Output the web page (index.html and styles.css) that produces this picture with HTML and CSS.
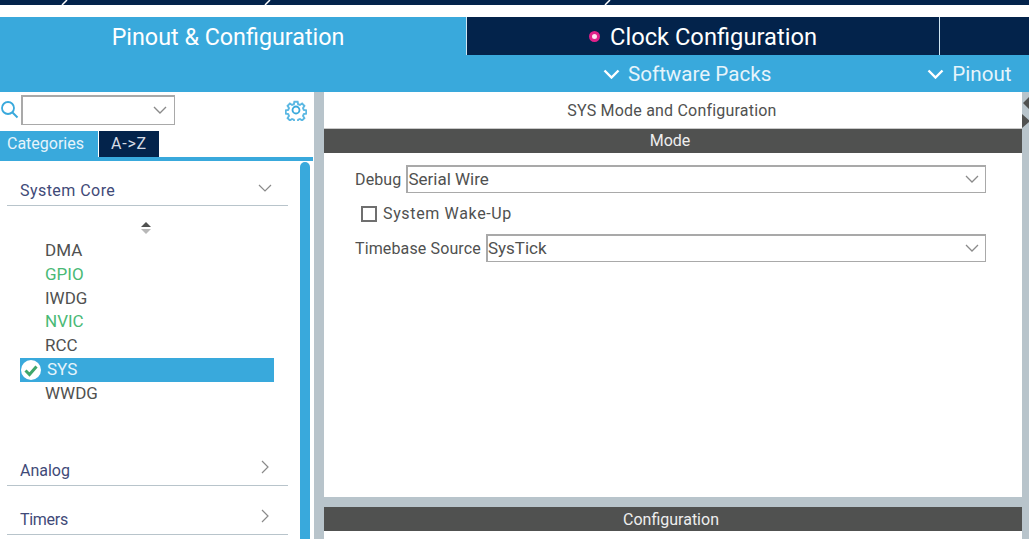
FILE: index.html
```html
<!DOCTYPE html>
<html lang="en">
<head>
<meta charset="utf-8">
<title>SYS Mode and Configuration</title>
<link rel="stylesheet" href="styles.css">
</head>
<body>
<div class="crumbs">
  <svg class="crumb-art" width="1029" height="6" viewBox="0 0 1029 6"><path d="M67 0l-5 5M270 0l-5 5M610 0l-5 5" fill="none" stroke="#fff" stroke-width="1.5"/></svg>
</div>
<div class="tabs">
  <div class="tab tab-active tab-pinout">Pinout &amp; Configuration</div>
  <div class="tab tab-clock"><span class="dot"></span>Clock Configuration</div>
  <div class="tab tab-rest"></div>
</div>
<div class="subbar">
  <div class="sub sub-packs"><svg class="sub-chev" width="17" height="10" viewBox="0 0 17 10"><path d="M1.500 1.500L8.500 8.500l7-7" fill="none" stroke="#fff" stroke-width="2.400"/></svg>Software Packs</div>
  <div class="sub sub-pinout"><svg class="sub-chev" width="17" height="10" viewBox="0 0 17 10"><path d="M1.500 1.500L8.500 8.500l7-7" fill="none" stroke="#fff" stroke-width="2.400"/></svg>Pinout</div>
</div>
<div class="main">
  <aside class="side">
    <div class="searchrow">
      <svg class="search-ic" width="19" height="19" viewBox="0 0 19 19"><circle cx="8" cy="8" r="6" fill="none" stroke="#39a9dc" stroke-width="1.8"/><path d="M12.500 12.500l5 5" stroke="#39a9dc" stroke-width="2"/></svg>
      <div class="searchbox"><svg width="14" height="8" viewBox="0 0 14 8"><path d="M1 1l6 6 6-6" fill="none" stroke="#8a8a8a" stroke-width="1.4"/></svg></div>
      <svg class="gear" width="22" height="22" viewBox="0 0 24 24"><path d="M10 2h4l.6 3 2.200.9 2.600-1.700 2.800 2.800-1.700 2.600.9 2.200 3 .6v4l-3 .6-.9 2.200 1.700 2.600-2.800 2.800-2.600-1.700-2.200.9-.6 3h-4l-.6-3-2.200-.9-2.600 1.700-2.800-2.800 1.700-2.600-.9-2.200-3-.6v-4l3-.6.9-2.200-1.700-2.600 2.800-2.800 2.600 1.700 2.200-.9z" transform="translate(1.200 1.200) scale(.9)" fill="none" stroke="#5bb8e3" stroke-width="2.300"/><circle cx="12" cy="12" r="3.800" fill="none" stroke="#39a9dc" stroke-width="2"/></svg>
    </div>
    <div class="cattabs">
      <div class="cat cat-on">Categories</div>
      <div class="cat cat-off">A-&gt;Z</div>
    </div>
    <div class="listwrap">
      <div class="list">
        <div class="group group-open"><span>System Core</span><svg width="14" height="8" viewBox="0 0 14 8"><path d="M1 1l6 6 6-6" fill="none" stroke="#8a8a8a" stroke-width="1.2"/></svg></div>
        <div class="sorter"><span class="sort-up"></span><span class="sort-down"></span></div>
        <ul class="items">
          <li class="item">DMA</li>
          <li class="item item-green">GPIO</li>
          <li class="item">IWDG</li>
          <li class="item item-green">NVIC</li>
          <li class="item">RCC</li>
          <li class="item item-sel"><svg class="check" width="22" height="22" viewBox="0 0 22 22"><circle cx="11" cy="11" r="10" fill="#fff"/><path d="M5.500 11.500l4 4 7-8" fill="none" stroke="#3fa66b" stroke-width="3"/></svg>SYS</li>
          <li class="item">WWDG</li>
        </ul>
        <div class="group group-analog"><span>Analog</span><svg width="8" height="14" viewBox="0 0 8 14"><path d="M1 1l6 6-6 6" fill="none" stroke="#8a8a8a" stroke-width="1.2"/></svg></div>
        <div class="group group-timers"><span>Timers</span><svg width="8" height="14" viewBox="0 0 8 14"><path d="M1 1l6 6-6 6" fill="none" stroke="#8a8a8a" stroke-width="1.2"/></svg></div>
      </div>
      <div class="scroll"></div>
    </div>
  </aside>
  <section class="panel">
    <div class="mode">
      <div class="paneltitle">SYS Mode and Configuration</div>
      <div class="band band-mode">Mode</div>
      <div class="form">
        <div class="row row-debug"><label>Debug</label><div class="select"><span>Serial Wire</span><svg width="14" height="8" viewBox="0 0 14 8"><path d="M1 1l6 6 6-6" fill="none" stroke="#8a8a8a" stroke-width="1.3"/></svg></div></div>
        <div class="checkrow"><span class="box"></span>System Wake-Up</div>
        <div class="row row-time"><label>Timebase Source</label><div class="select"><span>SysTick</span><svg width="14" height="8" viewBox="0 0 14 8"><path d="M1 1l6 6 6-6" fill="none" stroke="#8a8a8a" stroke-width="1.3"/></svg></div></div>
      </div>
    </div>
    <div class="config">
      <div class="band band-config">Configuration</div>
    </div>
    <svg class="collapse" width="7" height="40" viewBox="0 0 7 40"><path d="M7 4L1 10l6 6zM0 21l8 7-8 7z" fill="#505150"/></svg>
  </section>
</div>
</body>
</html>
```
FILE: styles.css
```css
* { box-sizing: border-box; }
html, body { margin: 0; padding: 0; }
body { width: 1029px; height: 539px; overflow: hidden; background: #fff; font-family: Roboto, "Liberation Sans", sans-serif; color: #505150; }
.crumbs { height: 17px; border-top: 5px solid #03234b; }
.crumb-art { display: block; margin-top: -5px; }
.tabs { display: flex; height: 38px; background: #03234b; }
.tab { color: #fff; line-height: 40px; height: 38px; text-align: center; }
.tab-active { width: 466px; background: #39a9dc; padding-right: 10px; font-size: 23.300px; }
.tab-clock { width: 474px; border-left: 1px solid #cfe6f2; border-right: 1px solid #cfe6f2; display: flex; align-items: center; justify-content: center; font-size: 23.700px; padding-top: 2px; }
.tab-rest { flex: 1; }
.dot { width: 11px; height: 11px; border-radius: 50%; background: #fbe3f0; border: 3px solid #e0218a; margin-right: 10px; margin-top: -2px; }
.subbar { height: 37px; background: #39a9dc; display: flex; color: #e6f4fb; font-size: 20.600px; padding-top: 1px; }
.sub { display: flex; align-items: center; }
.sub-chev { margin-right: 8px; }
.sub-packs { margin-left: 603px; }
.sub-pinout { margin-left: 156px; }
.main { display: flex; height: 447px; }
.side { width: 314px; flex: none; }
.searchrow { display: flex; align-items: center; height: 39px; padding-bottom: 4px; }
.search-ic { margin-right: 2px; flex: none; }
.searchbox { width: 154px; height: 30px; border: 1px solid #a9a9a9; border-width: 2px 1px 1px 2px; display: flex; align-items: center; justify-content: flex-end; padding-right: 7px; }
.gear { margin-left: 110px; }
.cattabs { display: flex; height: 30px; border-bottom: 4px solid #39a9dc; width: 313px; }
.cat { font-size: 16px; line-height: 26px; height: 26px; }
.cat-on { width: 98px; background: #39a9dc; color: #e6f4fb; padding-left: 7px; }
.cat-off { width: 60px; margin-left: 1px; background: #03234b; color: #d5dbe4; letter-spacing: .8px; text-align: center; }
.listwrap { display: flex; height: 378px; }
.list { width: 300px; padding-left: 7px; }
.group { width: 281px; display: flex; justify-content: space-between; align-items: center; border-bottom: 1px solid #b8c4cb; font-size: 16px; color: #3f4a78; padding-left: 13px; padding-right: 19px; height: 31px; }
.group-open { margin-top: 14px; padding-right: 16px; }
.group-open span { letter-spacing: .45px; }
.group-open svg { margin-top: -5px; }
.group-analog { margin-top: 27px; }
.group-analog svg, .group-timers svg { margin-top: -6px; }
.group-timers { margin-top: 18px; }
.group-timers span { letter-spacing: -.3px; }
.sorter { margin: 16px 0 0 134px; display: flex; flex-direction: column; gap: 2px; width: 10px; }
.sort-up { width: 0; border: 5px solid transparent; border-top: 0; border-bottom: 5px solid #505150; }
.sort-down { width: 0; border: 5px solid transparent; border-bottom: 0; border-top: 5px solid #b8b8b8; }
.items { list-style: none; margin: 5px 0 0; padding: 0 0 0 13px; height: 189px; }
.item { font-size: 17px; height: 23.800px; line-height: 23.800px; padding-left: 25px; width: 254px; color: #505150; }
.item-green { color: #49b975; }
.item-sel { background: #39a9dc; color: #e6f4fb; display: flex; align-items: center; padding-left: 0; }
.check { margin-right: 5px; flex: none; }
.scroll { width: 10px; background: #39a9dc; border-radius: 5px 5px 0 0; height: 377px; margin-top: 1px; flex: none; }
.panel { flex: 1; position: relative; background: #b8c4cb; padding-left: 10px; padding-right: 7px; display: flex; flex-direction: column; }
.mode { height: 405px; background: #fff; }
.paneltitle { height: 37px; font-size: 16px; letter-spacing: .2px; line-height: 37px; text-align: center; padding-right: 2px; border-bottom: 1px solid #c9c9c9; }
.band { background: #505150; color: #eee; height: 24px; font-size: 16px; line-height: 24px; text-align: center; }
.band-mode { padding-right: 6px; }
.band-config { padding-right: 4px; line-height: 25px; }
.form { padding: 12px 36px 0 31px; }
.row { display: flex; align-items: center; font-size: 16px; }
.row label { margin-right: 5px; white-space: nowrap; letter-spacing: .13px; }
.select { flex: 1; height: 28px; font-size: 17px; border: 1px solid #a9a9a9; border-top-width: 2px; border-left-width: 2px; display: flex; align-items: center; justify-content: space-between; padding: 0 6px 2px 0; }
.checkrow { display: flex; align-items: center; font-size: 16px; letter-spacing: .65px; height: 29px; margin: 6px 0 6px 6px; }
.box { width: 16px; height: 16px; border: 2px solid #6f6f6f; margin-right: 6px; }
.config { margin-top: 10px; flex: 1; background: #fff; }
.collapse { position: absolute; right: 0; top: 1px; }
```
